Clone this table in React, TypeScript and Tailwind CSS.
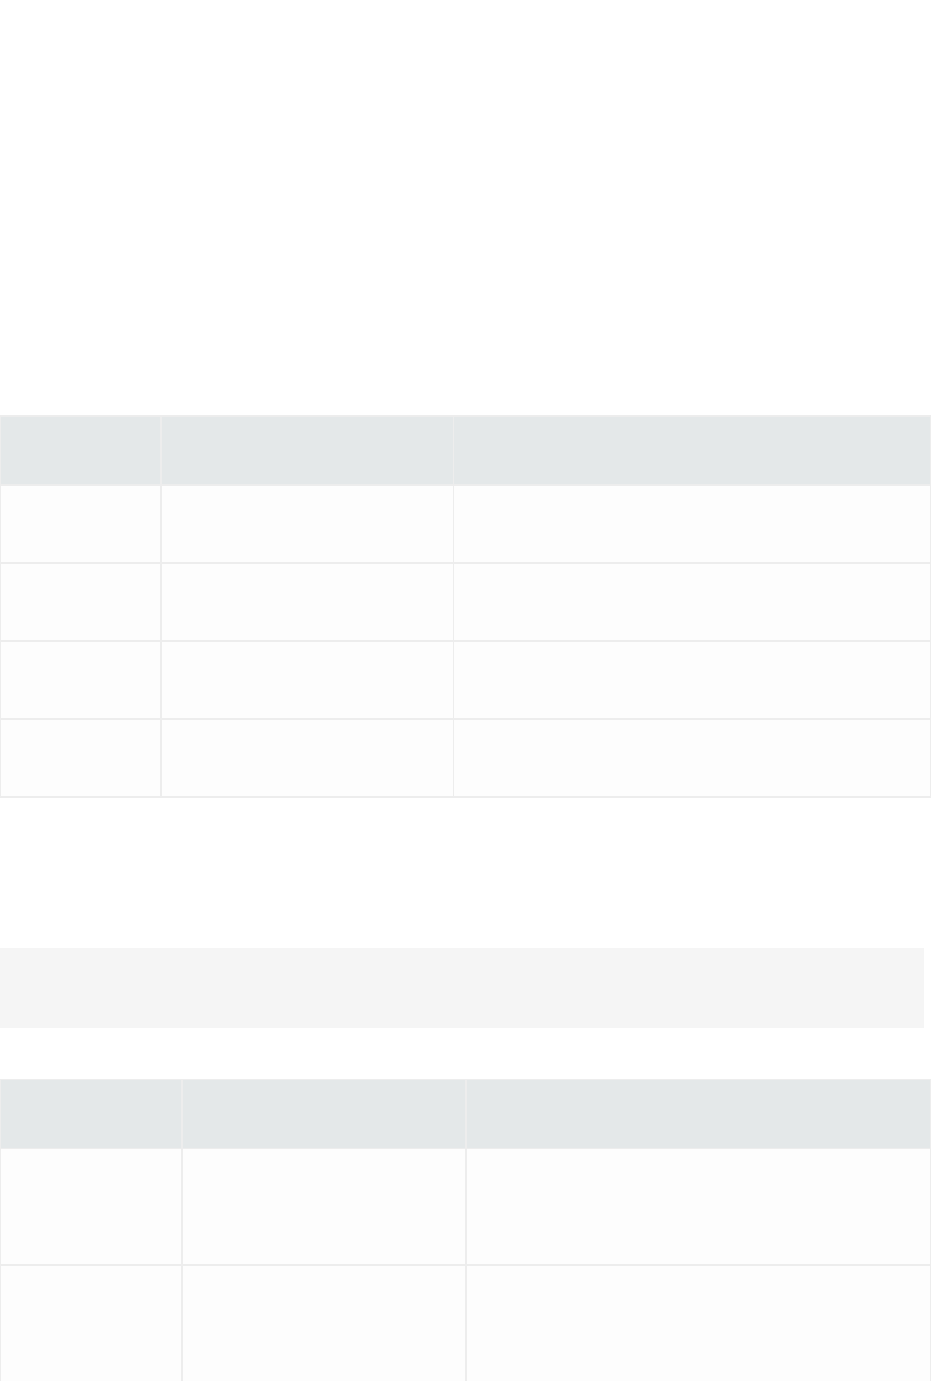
const BORDER = 'border-[#ededed]';

type Row = { key: string; height: string };

const FIRST_ROWS: Row[] = [
  { key: 'r1', height: 'h-[78px]' },
  { key: 'r2', height: 'h-[78px]' },
  { key: 'r3', height: 'h-[78px]' },
  { key: 'r4', height: 'h-[78px]' },
];

const SECOND_ROWS: Row[] = [
  { key: 'r1', height: 'h-[116px]' },
  { key: 'r2', height: 'h-[117px]' },
];

const FirstTable = () => (
  <div className={`mt-[415px] w-[931px] border-x border-b-2 ${BORDER}`}>
    <div className={`flex h-[69px] border-t-2 bg-[#e4e8e9] ${BORDER}`}>
      <div className={`w-[161px] border-r-2 ${BORDER}`} />
      <div className={`w-[292px] border-r ${BORDER}`} />
      <div className="flex-1" />
    </div>
    {FIRST_ROWS.map(row => (
      <div
        key={row.key}
        className={`flex ${row.height} border-t-2 bg-[#fdfdfd] ${BORDER}`}
      >
        <div className={`w-[161px] border-r-2 ${BORDER}`} />
        <div className={`w-[292px] border-r ${BORDER}`} />
        <div className="flex-1" />
      </div>
    ))}
  </div>
);

const SecondTable = () => (
  <div className={`mt-[51px] w-[931px] border-x ${BORDER}`}>
    <div className={`flex h-[69px] border-t bg-[#e4e8e9] ${BORDER}`}>
      <div className={`w-[182px] border-r-2 ${BORDER}`} />
      <div className={`w-[284px] border-r-2 ${BORDER}`} />
      <div className="flex-1" />
    </div>
    {SECOND_ROWS.map((row, i) => (
      <div
        key={row.key}
        className={`flex ${row.height} ${i === 0 ? 'border-t' : 'border-t-2'} bg-[#fdfdfd] ${BORDER}`}
      >
        <div className={`w-[182px] border-r-2 ${BORDER}`} />
        <div className={`w-[284px] border-r-2 ${BORDER}`} />
        <div className="flex-1" />
      </div>
    ))}
  </div>
);

export default function App() {
  return (
    <div className="h-[1382px] w-[931px] overflow-hidden bg-white font-['Liberation_Sans',sans-serif]">
      <FirstTable />
      <div className="mt-[150px] h-[80px] w-[924px] bg-[#f5f5f5]" />
      <SecondTable />
    </div>
  );
}
